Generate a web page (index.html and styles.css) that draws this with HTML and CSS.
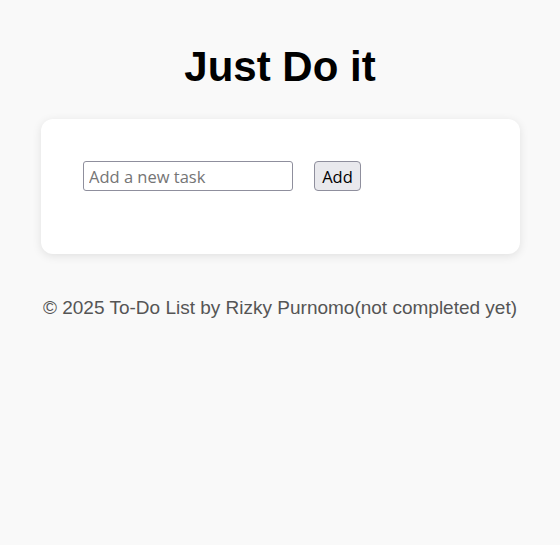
FILE: index.html
```html
<!DOCTYPE html>
<html>
<head>
<meta charset="utf-8">
<link rel="stylesheet" href="styles.css">
</head>
<body>
<h1 class="title">Just Do it</h1>
<div class="card">
  <form class="task-form">
    <input class="task-input" type="text" placeholder="Add a new task">
    <button class="add-btn" type="button">Add</button>
  </form>
  <ul class="task-list"></ul>
</div>
<footer class="footer">© 2025 To-Do List by Rizky Purnomo(not completed yet)</footer>
</body>
</html>
```
FILE: styles.css
```css
html, body {
  margin: 0;
  padding: 0;
}
body {
  background: #f9f9f9;
  font-family: "Liberation Sans", Arial, sans-serif;
  padding: 20px;
}
.title {
  text-align: center;
  font-size: 42px;
  margin: 23px 0 28px;
  color: #000;
}
.card {
  max-width: 479px;
  margin: 0 0 0 21px;
  background: #fff;
  border-radius: 12px;
  box-shadow: 0 2px 10px rgba(0,0,0,0.1);
  padding: 42px 42px 63px;
  box-sizing: border-box;
}
.task-form {
  display: flex;
  gap: 21px;
  align-items: center;
}
.task-input {
  width: 210px;
  height: 30px;
  box-sizing: border-box;
  border: 1px solid #8f8f9d;
  border-radius: 3px;
  padding: 0 5px;
  font-family: "Open Sans", "DejaVu Sans", sans-serif;
  font-size: 16.5px;
  color: #000;
}
.task-input::placeholder {
  color: #757575;
}
.add-btn {
  height: 30px;
  width: 47px;
  box-sizing: border-box;
  border: 1px solid #8f8f9d;
  border-radius: 4px;
  background: #e9e9ed;
  font-family: "Open Sans", "DejaVu Sans", sans-serif;
  font-size: 16.5px;
  color: #000;
  padding: 0;
}
.task-list {
  margin: 0;
  padding: 0;
  list-style: none;
}
.footer {
  text-align: center;
  font-size: 19px;
  color: #555;
  margin-top: 43px;
}
```
